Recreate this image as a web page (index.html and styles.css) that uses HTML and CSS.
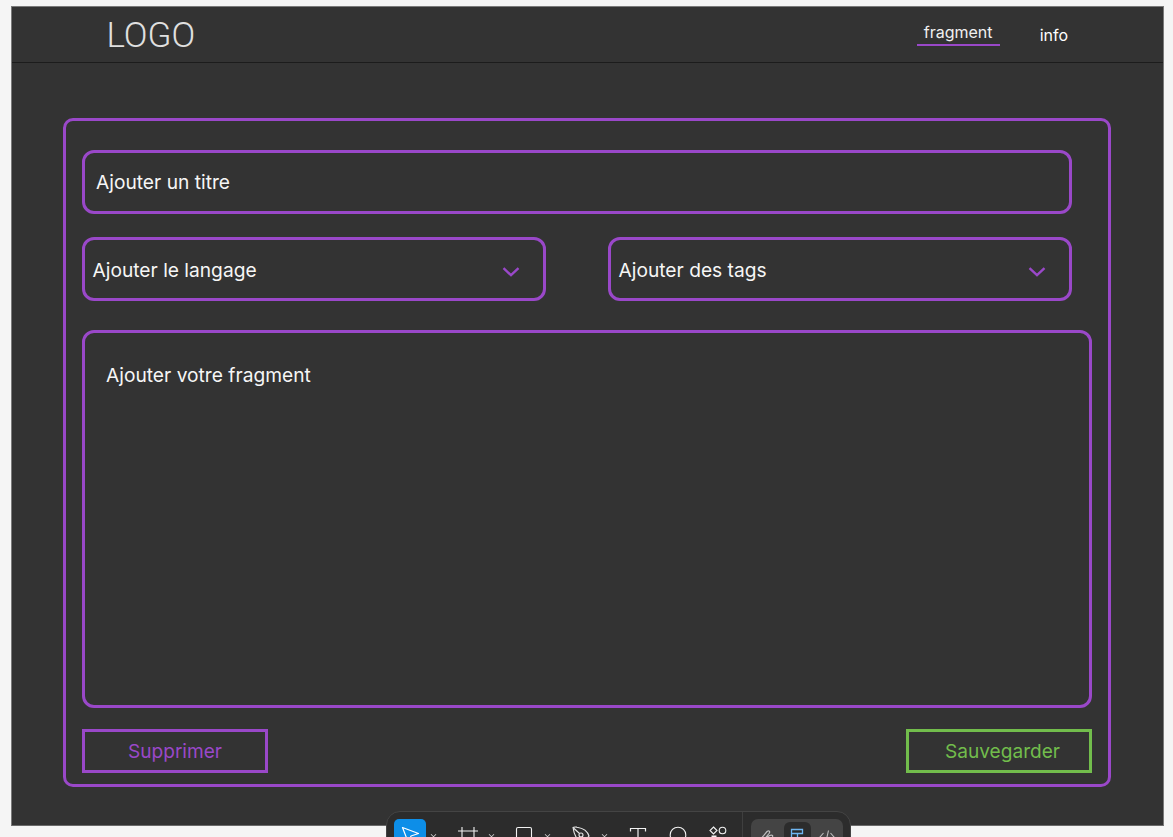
FILE: index.html
```html
<!DOCTYPE html>
<html lang="fr">
<head>
<meta charset="utf-8">
<title>Fragment</title>
<link rel="stylesheet" href="styles.css">
</head>
<body>
<div class="frame">
  <header class="topbar">
    <div class="logo">LOGO</div>
    <nav class="nav">
      <a class="nav-link nav-active">fragment</a>
      <a class="nav-link nav-info">info</a>
    </nav>
  </header>
  <main class="card">
    <div class="field field-title">Ajouter un titre</div>
    <div class="select-row">
      <div class="field field-select">
        <span>Ajouter le langage</span>
        <svg class="chev" width="18" height="10" viewBox="0 0 18 10"><path d="M1.500 1.200 9 8.200 16.500 1.200" fill="none" stroke="#9a48c9" stroke-width="2.400"/></svg>
      </div>
      <div class="field field-select">
        <span>Ajouter des tags</span>
        <svg class="chev" width="18" height="10" viewBox="0 0 18 10"><path d="M1.500 1.200 9 8.200 16.500 1.200" fill="none" stroke="#9a48c9" stroke-width="2.400"/></svg>
      </div>
    </div>
    <div class="field field-body">Ajouter votre fragment</div>
    <div class="actions">
      <button class="btn btn-delete">Supprimer</button>
      <button class="btn btn-save">Sauvegarder</button>
    </div>
  </main>
</div>
<div class="toolbar">
  <div class="tool tool-active">
    <svg width="20" height="20" viewBox="0 0 20 20"><path d="M2.500 2.500 18.500 8.500 11 11 8.500 18Z" fill="none" stroke="#fff" stroke-width="1.200" stroke-linejoin="round"/></svg>
  </div>
  <span class="caret"></span>
  <div class="tool tool-frame">
    <svg width="20" height="20" viewBox="0 0 20 20"><path d="M4 2V20M16 2V20M0 6H20M0 18H20" fill="none" stroke="#f2f2f2" stroke-width="1.100"/></svg>
  </div>
  <span class="caret"></span>
  <div class="tool tool-rect">
    <svg width="20" height="20" viewBox="0 0 20 20"><rect x="2.500" y="2.500" width="15" height="15" rx="1.500" fill="none" stroke="#f2f2f2" stroke-width="1.100"/></svg>
  </div>
  <span class="caret"></span>
  <div class="tool tool-pen">
    <svg width="20" height="20" viewBox="0 0 20 20"><path d="M2 2.500C3.500 1.500 5 2 6 2.200 11 3 16.500 6 18 11L13 17 6 13.500C3.500 10 2.500 6 2 2.500Z" fill="none" stroke="#e8e8e8" stroke-width="1.100"/><circle cx="10" cy="10" r="2" fill="none" stroke="#e8e8e8" stroke-width="1.100"/><path d="M2.500 3 8.500 8.500" fill="none" stroke="#e8e8e8" stroke-width="1.100"/></svg>
  </div>
  <span class="caret"></span>
  <div class="tool tool-text">
    <svg width="20" height="20" viewBox="0 0 20 20"><path d="M2.500 6.500V3.500H17.500V6.500M10 3.500V18" fill="none" stroke="#f2f2f2" stroke-width="1.200"/></svg>
  </div>
  <div class="tool tool-bubble">
    <svg width="20" height="20" viewBox="0 0 20 20"><circle cx="10" cy="10" r="7.800" fill="none" stroke="#f2f2f2" stroke-width="1.100"/></svg>
  </div>
  <div class="tool tool-comp">
    <svg width="20" height="20" viewBox="0 0 20 20"><path d="M5.500 2 9 5.500 5.500 9 2 5.500Z" fill="none" stroke="#f2f2f2" stroke-width="1.100"/><circle cx="14.500" cy="5.500" r="3.300" fill="none" stroke="#f2f2f2" stroke-width="1.100"/><rect x="3.500" y="10.500" width="5" height="6" fill="#f2f2f2"/></svg>
  </div>
  <span class="divider"></span>
  <div class="mode-group">
    <div class="mode">
      <svg width="18" height="18" viewBox="0 0 18 18"><path d="M2 12 9 3.500C11 2 12.500 3.500 11 5.500L5 13C8 10 13 6 14.500 7.500S10.500 13 12.500 14" fill="none" stroke="#bdbdbd" stroke-width="1.200"/></svg>
    </div>
    <div class="mode mode-active">
      <svg width="18" height="18" viewBox="0 0 18 18"><path d="M3.500 1.500H14.500V5.500H3.500ZM3.500 5.500V16.500H9.500V5.500M3.500 11H14.500" fill="none" stroke="#6fb6f2" stroke-width="1.300"/></svg>
    </div>
    <div class="mode">
      <svg width="18" height="18" viewBox="0 0 18 18"><path d="M5.500 5 2 9 5.500 13M12.500 5 16 9 12.500 13M10.500 2.500 7.500 15.500" fill="none" stroke="#bdbdbd" stroke-width="1.100"/></svg>
    </div>
  </div>
</div>
</body>
</html>
```
FILE: styles.css
```css
* { box-sizing: border-box; }

html, body {
  margin: 0;
  height: 837px;
  overflow: hidden;
}

body {
  position: relative;
  background: #f5f5f5;
  padding: 6px 9px 11px 11px;
  font-family: Inter, "Noto Sans", sans-serif;
  color: #fff;
}

.frame {
  height: 820px;
  background: #333333;
  border: 1px solid #7a7a7a;
  border-bottom-color: #6a6a6a;
}

.topbar {
  height: 56px;
  border-bottom: 1px solid #1c1c1c;
  display: flex;
  justify-content: space-between;
  padding-left: 94.500px;
}

.logo {
  font-family: Roboto, "Liberation Sans", sans-serif;
  font-weight: 300;
  font-size: 35px;
  line-height: 57px;
  color: #e0e0e0;
}

.nav {
  display: flex;
  align-items: flex-start;
  padding-right: 95px;
}

.nav-link {
  font-size: 16px;
  line-height: 20px;
  display: block;
}

.nav-active {
  width: 83px;
  margin-top: 15px;
  padding-bottom: 2px;
  text-align: center;
  border-bottom: 2px solid #9a48c9;
  color: #f0f0f0;
}

.nav-info {
  margin: 18px 0 0 40px;
}

.card {
  margin: 55px 0 0 51px;
  width: 1048px;
  height: 669px;
  border: 3px solid #9a48c9;
  border-radius: 10px;
  padding: 29px 16px 11px;
  display: flex;
  flex-direction: column;
}

.field {
  border: 3px solid #9a48c9;
  border-radius: 12px;
  font-size: 19.200px;
  line-height: 24px;
  color: #f6f6f6;
}

.field-title {
  width: 990px;
  height: 64px;
  padding: 17px 11px;
}

.select-row {
  width: 990px;
  margin-top: 23px;
  display: flex;
  justify-content: space-between;
}

.field-select {
  width: 464px;
  height: 64px;
  padding: 2px 23px 0 7.500px;
  display: flex;
  align-items: center;
  justify-content: space-between;
}

.chev {
  flex: none;
  margin-top: 3px;
}

.field-body {
  margin-top: 29px;
  height: 378px;
  padding: 30px 21px;
}

.actions {
  margin-top: 21px;
  display: flex;
  justify-content: space-between;
}

.btn {
  width: 186px;
  height: 44px;
  background: transparent;
  border: 3px solid;
  border-radius: 0;
  font-family: Inter, "Noto Sans", sans-serif;
  font-size: 19.100px;
  padding: 0;
}

.btn-delete {
  color: #9a48c9;
  border-color: #9a48c9;
}

.btn-save {
  color: #72bd4c;
  border-color: #72bd4c;
  padding-left: 7px;
}

.toolbar {
  position: absolute;
  left: 386px;
  top: 811px;
  width: 465px;
  height: 50px;
  background: #2c2c2c;
  border: 1px solid #444;
  border-radius: 14px;
  padding: 7px 0 0 7px;
  display: flex;
  align-items: flex-start;
}

.tool {
  width: 32px;
  height: 32px;
  flex: none;
  display: flex;
  align-items: center;
  justify-content: center;
}

.tool-active {
  background: #0d8ee8;
  border-radius: 5px;
}

.caret {
  flex: none;
  width: 5px;
  height: 5px;
  margin: 13px 0 0 5px;
  border-right: 1px solid #d8d8d8;
  border-bottom: 1px solid #d8d8d8;
  transform: rotate(45deg) scale(.8);
}

.tool-frame { margin-left: 16px; }
.tool-rect { margin-left: 14px; }
.tool-pen { margin-left: 14.500px; }
.tool-text { margin-left: 15px; }
.tool-bubble { margin-left: 8.500px; }
.tool-comp { margin-left: 8px; }

.divider {
  flex: none;
  width: 1px;
  height: 50px;
  margin: -7px 8px 0 8px;
  background: #3f3f3f;
}

.mode-group {
  flex: none;
  width: 92px;
  height: 36px;
  background: #444444;
  border-radius: 7px;
  padding: 3px 0 0 1px;
  display: flex;
}

.mode {
  width: 30px;
  height: 30px;
  display: flex;
  align-items: center;
  justify-content: center;
}

.mode-active {
  width: 27px;
  margin: 0 1.500px;
  background: #2c2c2c;
  border-radius: 6px;
}
```
